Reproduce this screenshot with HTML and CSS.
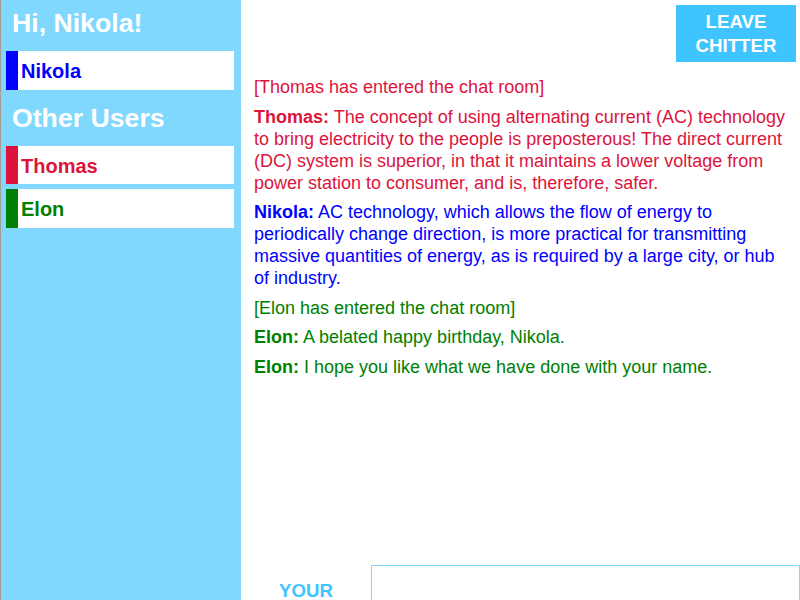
FILE: index.html
```html
<!DOCTYPE html>
<html lang="en">
<head>
<meta charset="utf-8">
<title>Chitter</title>
<link rel="stylesheet" href="styles.css">
</head>
<body>
<div class="app">
  <aside class="sidebar">
    <h1 class="side-title">Hi, Nikola!</h1>
    <div class="user user-blue">Nikola</div>
    <h2 class="side-title other">Other Users</h2>
    <div class="user user-red">Thomas</div>
    <div class="user user-green">Elon</div>
  </aside>
  <main class="main">
    <header class="topbar">
      <button class="leave">LEAVE<br>CHITTER</button>
    </header>
    <section class="messages">
      <p class="msg red">[Thomas has entered the chat room]</p>
      <p class="msg red"><b>Thomas:</b> The concept of using alternating current (AC) technology to bring electricity to the people is preposterous! The direct current (DC) system is superior, in that it maintains a lower voltage from power station to consumer, and is, therefore, safer.</p>
      <p class="msg blue"><b>Nikola:</b> AC technology, which allows the flow of energy to periodically change direction, is more practical for transmitting massive quantities of energy, as is required by a large city, or hub of industry.</p>
      <p class="msg green">[Elon has entered the chat room]</p>
      <p class="msg green"><b>Elon:</b> A belated happy birthday, Nikola.</p>
      <p class="msg green"><b>Elon:</b> I hope you like what we have done with your name.</p>
    </section>
    <footer class="composer">
      <label class="compose-label" for="msg">YOUR MESSAGE</label>
      <textarea id="msg" class="compose-input"></textarea>
    </footer>
  </main>
</div>
</body>
</html>
```

FILE: styles.css
```css
* { box-sizing: border-box; }
html, body {
  margin: 0;
  padding: 0;
  height: 100%;
  overflow: hidden;
  background: #ffffff;
  font-family: "Liberation Sans", Arial, sans-serif;
}
.app {
  display: flex;
  height: 100vh;
}
.sidebar {
  width: 241px;
  flex-shrink: 0;
  background: #80d8ff;
  border-left: 1px solid #a39c92;
  padding: 8px 7px 0 5px;
}
.side-title {
  margin: 0 0 12px 6px;
  font-size: 26.67px;
  line-height: 31px;
  font-weight: bold;
  color: #ffffff;
}
.side-title.other {
  margin-top: 13px;
  margin-bottom: 12px;
}
.user {
  height: 38.5px;
  background: #ffffff;
  display: flex;
  align-items: center;
  padding: 3px 0 0 3px;
  border-left: 12px solid;
  font-size: 20px;
  font-weight: bold;
  margin-bottom: 5px;
}
.user-blue { color: #0000ff; border-left-color: #0000ff; }
.user-red { color: #dc143c; border-left-color: #dc143c; }
.user-green { color: #008000; border-left-color: #008000; }

.main {
  flex: 1;
  display: flex;
  flex-direction: column;
  height: 100vh;
  overflow: hidden;
}
.topbar {
  display: flex;
  justify-content: flex-end;
  padding: 5px 4px 0 0;
}
.leave {
  width: 120px;
  height: 57px;
  border: none;
  background: #40c4ff;
  color: #ffffff;
  font-family: "Liberation Sans", Arial, sans-serif;
  font-weight: bold;
  font-size: 18.67px;
  line-height: 23.5px;
  padding: 0;
  cursor: pointer;
}
.messages {
  flex: 1;
  padding: 14px 10px 0 13px;
}
.msg {
  margin: 0 0 7.5px;
  font-size: 18px;
  line-height: 22px;
}
.msg b { font-weight: bold; }
.red { color: #dc143c; }
.blue { color: #0000ff; }
.green { color: #008000; }

.composer {
  flex-shrink: 0;
  height: 35px;
  display: flex;
  align-items: flex-start;
}
.compose-label {
  width: 130px;
  flex-shrink: 0;
  text-align: center;
  padding: 14px 20px 0;
  color: #40c4ff;
  font-weight: bold;
  font-size: 18.67px;
  line-height: 23px;
}
.compose-input {
  flex: 1;
  height: 100px;
  border: 1px solid #80d8ff;
  margin: 0;
  resize: none;
  outline: none;
}
```
